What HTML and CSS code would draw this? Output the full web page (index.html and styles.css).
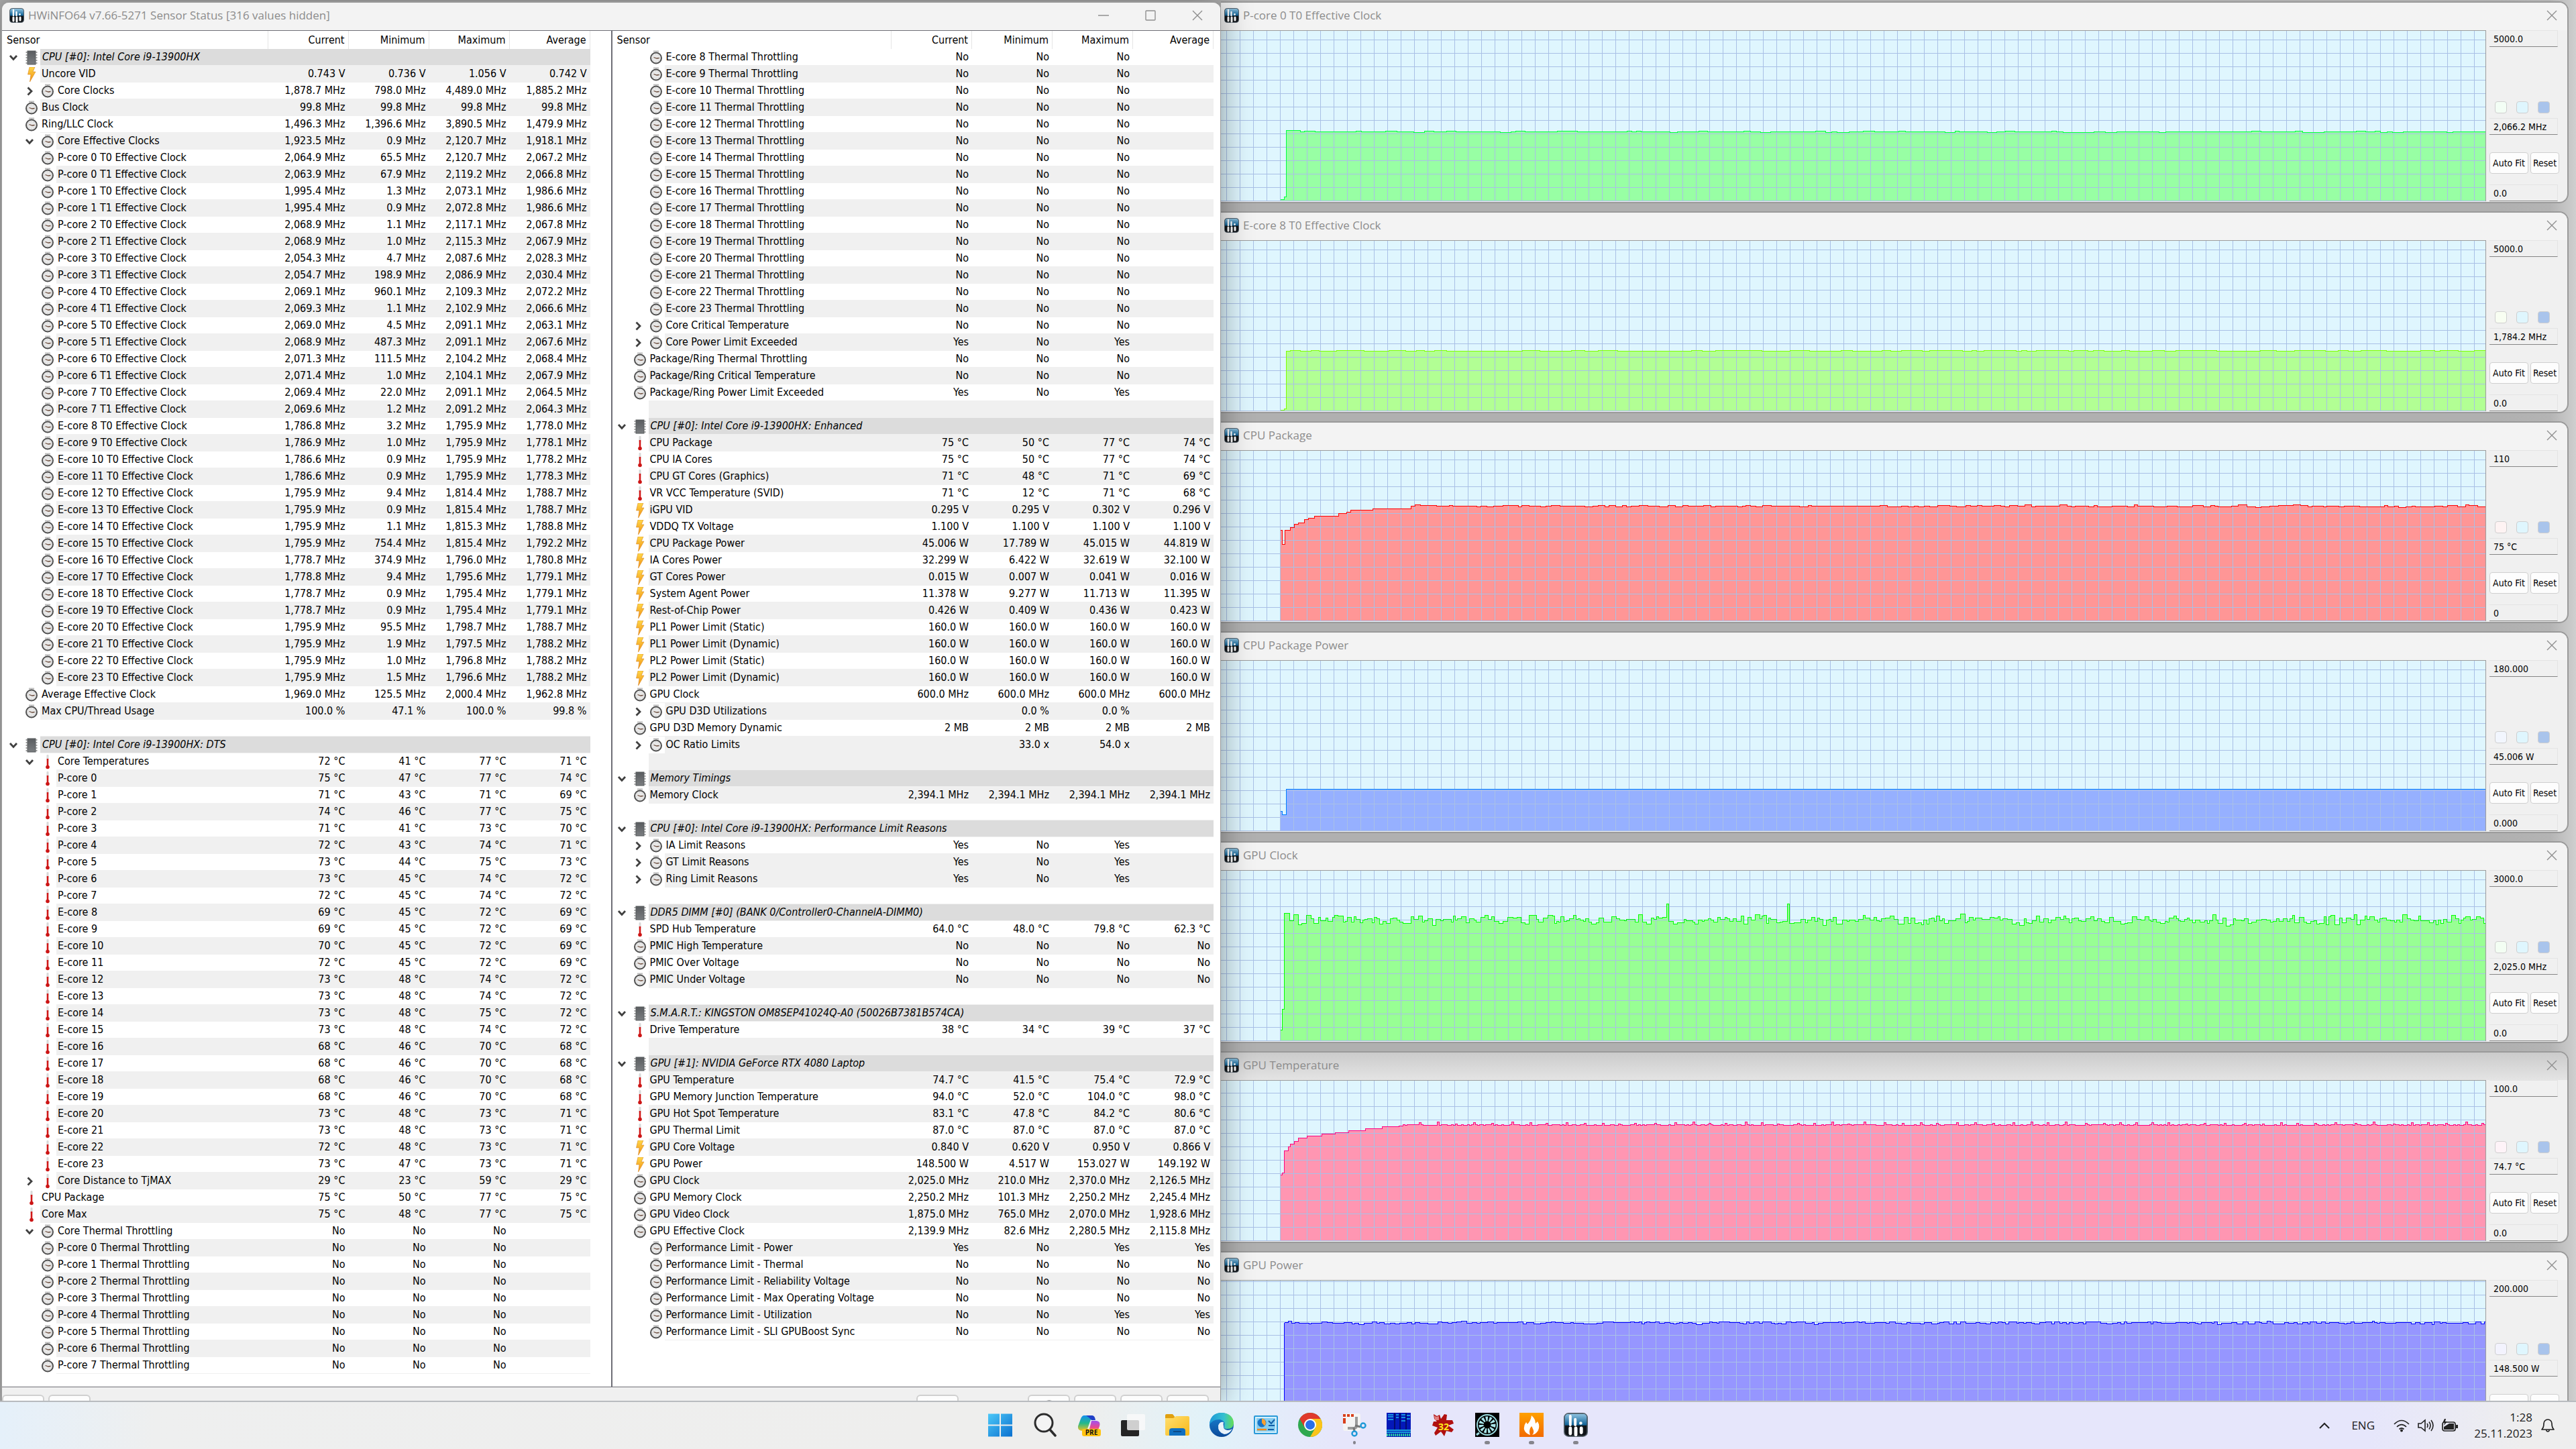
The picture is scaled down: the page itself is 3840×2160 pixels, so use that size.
FILE: index.html
```html
<!DOCTYPE html>
<html lang="en">
<head>
<meta charset="utf-8">
<title>HWiNFO64 Sensor Status</title>
<link rel="stylesheet" href="styles.css">
</head>
<body>
<svg class="sprite" aria-hidden="true">
  <defs>
    <linearGradient id="hwBlue" x1="0" y1="0" x2="0" y2="1"><stop offset="0" stop-color="#8fc3e0"/><stop offset="1" stop-color="#0b5e93"/></linearGradient>
    <linearGradient id="boltFill" x1="0" y1="0" x2="0" y2="1"><stop offset="0" stop-color="#ffd94a"/><stop offset="1" stop-color="#f08a10"/></linearGradient>
    <linearGradient id="chipFill" x1="0" y1="0" x2="0" y2="1"><stop offset="0" stop-color="#5a5d60"/><stop offset="1" stop-color="#7a7d80"/></linearGradient>
    <linearGradient id="winFill" x1="0" y1="0" x2="1" y2="1"><stop offset="0" stop-color="#4cc8f8"/><stop offset="1" stop-color="#0a70cf"/></linearGradient>
    <linearGradient id="folderFill" x1="0" y1="0" x2="1" y2="1"><stop offset="0" stop-color="#ffdf70"/><stop offset="1" stop-color="#f8b818"/></linearGradient>
    <linearGradient id="edgeTop" x1="0" y1="0" x2="1" y2="0"><stop offset="0" stop-color="#1c98d8"/><stop offset=".6" stop-color="#35c0d0"/><stop offset="1" stop-color="#66df52"/></linearGradient>
    <linearGradient id="edgeLow" x1="0" y1="0" x2="0" y2="1"><stop offset="0" stop-color="#1a86d6"/><stop offset="1" stop-color="#0b4a9a"/></linearGradient>
    <linearGradient id="copA" x1="0" y1="0" x2="0" y2="1"><stop offset="0" stop-color="#1490f0"/><stop offset=".5" stop-color="#24b98a"/><stop offset="1" stop-color="#f0c020"/></linearGradient>
    <linearGradient id="copB" x1="0" y1="0" x2="0" y2="1"><stop offset="0" stop-color="#a050f0"/><stop offset=".6" stop-color="#e84a90"/><stop offset="1" stop-color="#f88040"/></linearGradient>
    <linearGradient id="fireFill" x1="0" y1="0" x2="0" y2="1"><stop offset="0" stop-color="#ffa000"/><stop offset="1" stop-color="#f26a00"/></linearGradient>
  </defs>
  <symbol id="i-app" viewBox="0 0 22 22">
    <rect x=".5" y=".5" width="21" height="21" rx="4" fill="#101418" stroke="#55606a"/>
    <path d="M1 11.500V4.500Q1 1 4.500 1h13Q21 1 21 4.500v7z" fill="url(#hwBlue)"/>
    <path d="M6 3v8M10.500 6v5" stroke="#fff" stroke-width="2.400" stroke-linecap="round"/><circle cx="15.500" cy="9.500" r="1.400" fill="#fff"/>
    <path d="M6 14v5M11 14v6M16 14v4" stroke="#fff" stroke-width="3" stroke-linecap="round"/>
  </symbol>
  <symbol id="i-chip" viewBox="0 0 20 22">
    <path d="M2.500 2v19M17.500 2v19" stroke="#9b9b9b" stroke-width="2" stroke-dasharray="2 2"/>
    <rect x="4" y="1" width="12" height="20" fill="url(#chipFill)" stroke="#55585a"/>
  </symbol>
  <symbol id="i-clock" viewBox="0 0 20 22">
    <path d="M6 1.500h8" stroke="#bbb" stroke-width="2"/>
    <circle cx="10" cy="11.500" r="8" fill="#e8e8e8" stroke="#505050" stroke-width="2"/>
    <circle cx="10" cy="11.500" r="5.500" fill="none" stroke="#bdbdbd" stroke-width="1" stroke-dasharray="1 3"/>
    <path d="M6.500 10.500L11 12l3.500-.5" fill="none" stroke="#6a4a3a" stroke-width="1.300"/>
  </symbol>
  <symbol id="i-temp" viewBox="0 0 20 22">
    <rect x="8.500" y="0" width="3" height="9" rx="1" fill="#d8d8d8"/>
    <path d="M10 6v12" stroke="#d01818" stroke-width="2.600"/><circle cx="10" cy="18.500" r="2.800" fill="#cc1515"/>
  </symbol>
  <symbol id="i-bolt" viewBox="0 0 20 22">
    <path d="M7 0h8l-3 7h4L7.500 22l1.500-11H4.500z" fill="url(#boltFill)" stroke="#d98820" stroke-width=".6"/>
  </symbol>
  <symbol id="i-open" viewBox="0 0 14 14"><path d="M2 4l5 5.500L12 4" fill="none" stroke="#404040" stroke-width="2.800"/></symbol>
  <symbol id="i-shut" viewBox="0 0 14 14"><path d="M4.500 1.500L10 7l-5.500 5.500" fill="none" stroke="#404040" stroke-width="2.800"/></symbol>
  <symbol id="i-close" viewBox="0 0 16 16"><path d="M1 1l14 14M15 1L1 15" stroke="#8f8f8f" stroke-width="1.400"/></symbol>
</svg>

<main class="desktop">
  <section class="window sensors">
    <header class="titlebar">
      <svg class="app-icon"><use href="#i-app"/></svg>
      <h1 class="title">HWiNFO64 v7.66-5271 Sensor Status [316 values hidden]</h1>
      <button class="caption-btn" aria-label="Minimize"><svg viewBox="0 0 16 16"><path d="M0 8h16" stroke="#8f8f8f" stroke-width="1.400"/></svg></button>
      <button class="caption-btn" aria-label="Maximize"><svg viewBox="0 0 16 16"><rect x="1" y="1" width="14" height="14" rx="1" fill="none" stroke="#8f8f8f" stroke-width="1.400"/></svg></button>
      <button class="caption-btn" aria-label="Close"><svg><use href="#i-close"/></svg></button>
    </header>
    <div class="panes">
      <div class="pane pane-left"><table class="grid" id="left"></table></div>
      <div class="pane pane-right"><table class="grid" id="right"></table></div>
    </div>
    <footer class="tools">
      <button class="tool" aria-label="Expand"></button>
      <button class="tool" aria-label="Collapse"></button>
      <span class="spring"></span>
      <button class="tool" aria-label="Network"><svg viewBox="0 0 40 30"><path d="M5 5l22 5v18H5z" fill="#3f6f94" stroke="#bcc8d0" stroke-width="2"/></svg></button>
      <span class="tool-space"></span>
      <button class="tool" aria-label="Clock"><svg viewBox="0 0 40 30"><circle cx="20" cy="19" r="14" fill="#fff" stroke="#333" stroke-width="3"/><path d="M20 5v14" stroke="#333" stroke-width="2"/></svg></button>
      <button class="tool" aria-label="Log"><svg viewBox="0 0 40 30"><path d="M6 6h24l4 5v18H6z" fill="#eee" stroke="#aaa" stroke-width="3"/></svg></button>
      <button class="tool" aria-label="Settings"><svg viewBox="0 0 40 30"><path d="M18 4h4l3 24h-10z" fill="#b8c4c8"/></svg></button>
      <button class="tool" aria-label="Exit"></button>
    </footer>
  </section>
  <div class="charts" id="charts"></div>
</main>

<footer class="taskbar">
  <nav class="apps">
    <button aria-label="Start"><svg viewBox="0 0 36 36"><path d="M0 1.500h17v16H0zM19 1.500h17v16H19zM0 19.500h17v16H0zM19 19.500h17v16H19z" fill="url(#winFill)"/></svg></button>
    <button aria-label="Search"><svg viewBox="0 0 36 36"><circle cx="17" cy="15" r="13" fill="#f4f4f4" stroke="#2c2c2c" stroke-width="3"/><path d="M26 25l8 9" stroke="#2c2c2c" stroke-width="3.500" stroke-linecap="round"/></svg></button>
    <button aria-label="Copilot"><svg viewBox="0 0 36 36"><path d="M11 4h11q4 0 5 6h-6l-5 14q-2 4-7 3-8 0-7-7L6 9q2-5 5-5z" fill="url(#copA)"/><path d="M14 4h9q4 0 5 7h-6q-3-4-8-7z" fill="#2140c8"/><path d="M22 12h8q6 1 4 8l-3 8H18z" fill="url(#copB)"/><rect x="8" y="24" width="28" height="11" rx="3" fill="#ffc410"/><text x="22" y="33" class="badge-pre" text-anchor="middle">PRE</text></svg></button>
    <button aria-label="Task view"><svg viewBox="0 0 36 36"><rect x="0" y="11" width="27" height="24" rx="2" fill="#242424"/><rect x="9" y="2" width="27" height="24" rx="2" fill="#fafafa" opacity=".8"/></svg></button>
    <button aria-label="File Explorer"><svg viewBox="0 0 36 36"><path d="M0 4q0-2 2-2h9l4 5v6H0z" fill="#e0a010"/><path d="M0 8h12l4-3h18q2 0 2 2v25q0 2-2 2H2q-2 0-2-2z" fill="url(#folderFill)"/><path d="M6 34V27q0-4 4-4h16q4 0 4 4v7z" fill="#0f6fc0"/><path d="M12 28h12" stroke="#0a4a88" stroke-width="2"/></svg></button>
    <button aria-label="Edge"><svg viewBox="0 0 36 36"><circle cx="18" cy="18" r="18" fill="url(#edgeLow)"/><path d="M0 16Q2 0 18 0q17 1 18 15 0 9-10 9-6 0-4-4 2-8-6-10Q5 9 0 18z" fill="url(#edgeTop)"/><path d="M13 19q2-6 8-5-1 3 0 6-1 5 6 6 4 0 7-2-5 8-12 8-10-3-9-13z" fill="#e8f3fb"/></svg></button>
    <button aria-label="System monitor"><svg viewBox="0 0 36 36"><rect x="1" y="5" width="34" height="26" rx="1" fill="#d6f0fb" stroke="#2a9ad8" stroke-width="2"/><rect x="4" y="8" width="28" height="20" fill="#86cdf0"/><circle cx="12" cy="15" r="6.500" fill="#1774c8"/><path d="M12 15V8.500a6.500 6.500 0 0 1 4 11z" fill="#f8a030"/><path d="M22 12l4 4 5-6M22 19h9" fill="none" stroke="#125fa8" stroke-width="2"/><path d="M5 25h14" stroke="#f08a18" stroke-width="2.500"/><path d="M21 25h9" stroke="#125fa8" stroke-width="2"/></svg></button>
    <button aria-label="Chrome"><svg viewBox="0 0 36 36"><circle cx="18" cy="18" r="18" fill="#2fa84f"/><path d="M2.400 9A18 18 0 0 1 33.600 9H18L10.200 22.500z" fill="#e0392c"/><path d="M33.600 9A18 18 0 0 1 18 36l7.800-13.500L18 9z" fill="#fbc41a"/><circle cx="18" cy="18" r="9" fill="#fff"/><circle cx="18" cy="18" r="7" fill="#2a6fe8"/></svg></button>
    <button class="small-dot" aria-label="Snipping Tool"><svg viewBox="0 0 36 36"><rect x="1" y="1" width="26" height="26" rx="3" fill="#f4f4f4"/><path d="M3 12V4h14" fill="none" stroke="#d8401c" stroke-width="4" stroke-dasharray="4 2"/><path d="M3 12v6" stroke="#d8401c" stroke-width="4" stroke-dasharray="4 2"/><path d="M8 23h9q4 0 4-4V6" fill="none" stroke="#9a9a9a" stroke-width="4"/><path d="M19 19l8 2M17 22l1 6" stroke="#777" stroke-width="3"/><circle cx="31" cy="19" r="3.500" fill="none" stroke="#1f9ad8" stroke-width="2.500"/><circle cx="18" cy="31" r="3.500" fill="none" stroke="#1f9ad8" stroke-width="2.500"/></svg></button>
    <button aria-label="Throttle monitor"><svg viewBox="0 0 36 36"><rect width="36" height="36" fill="#0418b8"/><path d="M2 3h8M2 6h8M2 10h8M14 3h4M14 7h4M22 3h6M22 7h6M22 12h6M30 4h5M30 9h5" stroke="#20b8e8" stroke-width="1.500"/><path d="M0 26h36M0 29h36" stroke="#18a0d8" stroke-width="2"/><path d="M12 0v25M20 0v25M29 0v25" stroke="#020c70" stroke-width="2"/><path d="M0 33h36" stroke="#28c8a0" stroke-width="4" stroke-dasharray="2 1"/></svg></button>
    <button aria-label="Benchmark 32"><svg viewBox="0 0 36 36"><path d="M4 2l5 3 4-2 2 6 5-7 4 1-1 8 9 0 2 5-8 3 8 6-3 4-8-2-3 8-5-7-8 6-2-4 5-8-8-3 2-6 5 0-4-4z" fill="#b01010"/><path d="M5 4l3 2 4-1v6H6z" fill="#e08080"/><text x="19" y="26" class="badge-32" text-anchor="middle">32</text></svg></button>
    <button class="dot" aria-label="Turbine"><svg viewBox="0 0 36 36"><rect width="36" height="36" fill="#000"/><circle cx="18" cy="18" r="15" fill="none" stroke="#9adce0" stroke-width="2"/><circle cx="18" cy="18" r="9" fill="none" stroke="#a8e4e8" stroke-width="7" stroke-dasharray="3 2"/><circle cx="18" cy="18" r="4" fill="#000"/><path d="M6 30l-4 3" stroke="#9adce0" stroke-width="3"/></svg></button>
    <button class="dot" aria-label="FurMark"><svg viewBox="0 0 36 36"><rect width="36" height="36" fill="url(#fireFill)"/><path d="M18 4q6 5 6 12l3-3q4 6 1 13-3 6-9 7 4-4 1-9-1-3-2-4-5 5-2 13-7-2-9-8-1-6 3-11l2 3q5-5 6-13z" fill="#fff"/></svg></button>
    <button class="dot" aria-label="HWiNFO64"><svg viewBox="0 0 22 22"><use href="#i-app" width="22" height="22"/></svg></button>
  </nav>
  <div class="tray">
    <button class="tray-up" aria-label="Show hidden icons"><svg viewBox="0 0 16 16"><path d="M1 12l7-7 7 7" fill="none" stroke="#222" stroke-width="2"/></svg></button>
    <button class="tray-lang">ENG</button>
    <button class="tray-icons" aria-label="Network, volume, battery">
      <svg viewBox="0 0 24 20"><path d="M1 8q11-11 22 0M5 12q7-7 14 0M8.500 15.500q3.500-3 7 0" fill="none" stroke="#222" stroke-width="1.700"/><circle cx="12" cy="17.500" r="2" fill="#222"/></svg>
      <svg viewBox="0 0 24 20"><path d="M1 7h4l6-5v16l-6-5H1zM14 7q2 3 0 6M17 4.500q4 5.500 0 11M20 2q6 8 0 16" fill="none" stroke="#222" stroke-width="1.600"/></svg>
      <svg viewBox="0 0 24 20"><rect x="1" y="5" width="19" height="13" rx="3" fill="none" stroke="#222" stroke-width="1.700"/><path d="M3 12l8-5h7v9H3z" fill="#222"/><path d="M21 9h3v5h-3zM4 0L1 6h3L3 10l5-6H5l1-4z" fill="#222"/></svg>
    </button>
    <div class="clock"><time>1:28</time><time>25.11.2023</time></div>
    <button class="tray-bell" aria-label="Notifications"><svg viewBox="0 0 20 22"><path d="M1 17q3-3 3-9a6 6 0 0 1 12 0q0 6 3 9zM7.500 18q2.500 4 5 0" fill="none" stroke="#222" stroke-width="1.700" stroke-linejoin="round"/></svg></button>
  </div>
</footer>
<script src="app.js"></script>
</body>
</html>
```
FILE: styles.css
```css
* { box-sizing: border-box; }

body {
  margin: 0;
  height: 100vh;
  display: flex;
  flex-direction: column;
  overflow: hidden;
  background: linear-gradient(90deg, #b0b0b0 97%, #b4b4b4 99%, #cfcfcf);
  color: #000;
  font-family: "DejaVu Sans Condensed", "DejaVu Sans", sans-serif;
  font-size: 16px;
}

button { font: inherit; color: inherit; padding: 0; border: 0; background: none; }
.sprite { position: absolute; width: 0; height: 0; }

.desktop {
  flex: 1;
  min-height: 0;
  overflow: hidden;
  display: grid;
  grid-template-columns: 1820fr 2020fr;
  grid-template-rows: minmax(0, 1fr);
  padding-top: 2px;
}

/* Windows */
.window {
  display: flex;
  flex-direction: column;
  background: #f0f0f0;
  border: 2px solid #9a9a9a;
  border-radius: 12px;
  overflow: hidden;
}
.titlebar {
  display: flex;
  align-items: center;
  height: 41px;
  flex: none;
  background: #f3f3f3;
  padding-bottom: 4px;
  padding-right: 15px;
}
.app-icon { width: 22px; height: 22px; flex: none; }
.title {
  flex: 1;
  margin: 0 0 0 6px;
  font: 17px/24px "Open Sans", sans-serif;
  color: #8c8c8c;
}
.caption-btn { width: 16px; height: 16px; }
.caption-btn svg { display: block; width: 16px; height: 16px; }

.sensors {
  position: relative;
  z-index: 1;
  min-height: 0;
  margin-left: 1px;
  border-width: 2px 1px 0 2px;
  border-radius: 12px 12px 0 0;
  box-shadow: 0 0 48px rgba(0, 0, 0, .4);
}
.sensors .titlebar { padding: 0 26px 4px 11px; gap: 0; }
.sensors .caption-btn { margin-left: 54px; }

/* Sensor lists */
.panes {
  flex: 1;
  min-height: 0;
  display: grid;
  grid-template-columns: 908fr 909fr;
  border: solid #6e6e76;
  border-width: 1px 0;
}
.pane { background: #fff; overflow: hidden; }
.pane-left { padding-right: 31px; }
.pane-right { padding-right: 10px; border-left: 2px solid #6e6e76; }
.grid {
  width: 100%;
  border-collapse: separate;
  border-spacing: 0;
  table-layout: fixed;
}
.grid th, .grid td {
  height: 25px;
  padding: 0 5px 0 0;
  line-height: 24px;
  text-align: right;
  font-weight: 400;
  white-space: nowrap;
}
.grid td, .grid tbody th { border-bottom: 1px solid #f0f0f0; }
.grid thead th { height: 27px; border-right: 1px solid #e5e5e5; }
.grid thead th:first-child { padding-left: 7px; text-align: left; }
.grid thead th:not(:first-child) { width: 120px; }
.grid tbody th { padding: 0; border: 0; }
.name { display: flex; align-items: center; height: 25px; text-align: left; }
.twisty { width: 14px; height: 14px; flex: none; }
.kind { width: 20px; height: 22px; flex: none; }
.name .label {
  flex: 1;
  height: 25px;
  padding-left: 2px;
  border-bottom: 1px solid #f0f0f0;
  line-height: 24px;
}
.lvl-0 { padding-left: 10px; gap: 10px; }
.lvl-1 { padding-left: 34px; gap: 3px; }
.lvl-2 { padding-left: 58px; gap: 3px; }
.lvl-2.foldable { padding-left: 34px; gap: 10px; }
.lvl-2.foldable .label { margin-left: -7px; }
.lvl-0 .label { margin-left: -7px; padding-left: 3px; }
.blank { padding-left: 57px; }
.pane-right .name { margin-left: -3px; }
.odd td, .odd .label { background: #f0f0f0; }
.group td, .group .label { background: #dcdcdc; }
.group .label { font-style: italic; }

.tools {
  height: 20px;
  flex: none;
  display: flex;
  align-items: flex-start;
  gap: 6px;
  padding: 11px 17px 0 0;
  overflow: hidden;
}
.tool {
  width: 63px;
  height: 40px;
  flex: none;
  background: #fdfdfd;
  border: 2px solid #d0d0d0;
  border-radius: 6px;
}
.tool svg { display: block; width: 40px; height: 30px; margin: 0 auto; }
.spring { flex: 1; }
.tool-space { width: 91px; }

/* Graph windows */
.charts {
  display: flex;
  flex-direction: column;
  gap: 12px;
  min-height: 0;
  padding-right: 11px;
}
.graph { flex: none; border-left: 0; border-radius: 0 14px 14px 0; }
.graph .titlebar { padding-left: 5px; }
.graph.shaded .titlebar { background: linear-gradient(#cbcbcb, #e4e4e4); }
.graph-body { display: flex; gap: 5px; padding-bottom: 1px; }
.plot {
  flex: 1;
  min-width: 0;
  border-top: 1px solid #9c9c9c;
  border-right: 1px solid #9c9c9c;
}
.plot svg { display: block; width: 100%; background: #dff6fe; }
.plot path { shape-rendering: crispEdges; }
.plot .trace { fill: none; stroke-width: 1; }
.plot .lines { fill: none; stroke: #a9c0e6; }
.side {
  width: 116px;
  display: flex;
  flex-direction: column;
  font-size: 14px;
}
.field {
  width: 102px;
  height: 25px;
  padding: 0 6px;
  border: solid #e4e4e4;
  border-width: 1px 1px 1px 0;
  border-bottom-color: #858585;
  background: #f0f0f0;
  color: #000;
  font: inherit;
}
.swatches { display: flex; gap: 14px; margin: auto 0 7px 8px; }
.swatch {
  width: 18px;
  height: 18px;
  border: 1px solid #cfcfcf;
  border-radius: 4px;
}
.actions { display: flex; gap: 3px; margin: 26px 0 16px; }
.action {
  width: 58px;
  height: 32px;
  background: #fdfdfd;
  border: 1px solid #cfcfcf;
  border-radius: 4px;
}
.action.reset { width: 43px; }

/* Taskbar */
.taskbar {
  position: relative;
  z-index: 2;
  flex: none;
  height: 72px;
  display: grid;
  grid-template-columns: 1fr auto 1fr;
  border-top: 2px solid #b8bbbf;
  background: linear-gradient(90deg, #e5f0fa, #eeefef 6%, #eeeeed 36%, #eeeeed 42%, #e1f2f9 47%, #e6e6fb 52%, #e6e6fb 92%, #eeeeee 98%);
}
.apps { grid-column: 2; display: flex; gap: 30px; padding-top: 16px; }
.apps button { position: relative; width: 36px; height: 36px; }
.apps svg { display: block; width: 36px; height: 36px; }
.dot::after, .small-dot::after {
  content: "";
  position: absolute;
  left: 14px;
  top: 42px;
  width: 8px;
  height: 5px;
  border-radius: 3px;
  background: #85858d;
}
.small-dot::after { left: 16px; width: 4px; }
.badge-pre { font: 700 10px "Open Sans", sans-serif; fill: #111; }
.badge-32 { font: 700 14px "Open Sans", sans-serif; fill: #ffe818; }
.tray {
  display: flex;
  justify-content: flex-end;
  align-items: center;
  padding-right: 32px;
  font: 17px/24px "Open Sans", sans-serif;
  color: #222;
}
.tray svg { display: block; }
.tray-up svg { width: 16px; height: 16px; }
.tray-lang { margin-left: 32px; }
.tray-icons { display: flex; gap: 12px; margin-left: 28px; }
.tray-icons svg { width: 24px; height: 20px; }
.clock { display: flex; flex-direction: column; width: 98px; text-align: right; margin: 0 13px; }
.tray-bell svg { width: 20px; height: 22px; }
```
FILE: app.js
```js
// Row format: kind + level mark | name | current | minimum | maximum | average | unit
// kinds: g group, c clock, t temperature, v voltage/power
// marks: 1 first level, 2 second level, + folded, - unfolded
const leftRows = `g|CPU [#0]: Intel Core i9-13900HX
v1|Uncore VID|0.743|0.736|1.056|0.742|V
c+|Core Clocks|1,878.7|798.0|4,489.0|1,885.2|MHz
c1|Bus Clock|99.8|99.8|99.8|99.8|MHz
c1|Ring/LLC Clock|1,496.3|1,396.6|3,890.5|1,479.9|MHz
c-|Core Effective Clocks|1,923.5|0.9|2,120.7|1,918.1|MHz
c2|P-core 0 T0 Effective Clock|2,064.9|65.5|2,120.7|2,067.2|MHz
c2|P-core 0 T1 Effective Clock|2,063.9|67.9|2,119.2|2,066.8|MHz
c2|P-core 1 T0 Effective Clock|1,995.4|1.3|2,073.1|1,986.6|MHz
c2|P-core 1 T1 Effective Clock|1,995.4|0.9|2,072.8|1,986.6|MHz
c2|P-core 2 T0 Effective Clock|2,068.9|1.1|2,117.1|2,067.8|MHz
c2|P-core 2 T1 Effective Clock|2,068.9|1.0|2,115.3|2,067.9|MHz
c2|P-core 3 T0 Effective Clock|2,054.3|4.7|2,087.6|2,028.3|MHz
c2|P-core 3 T1 Effective Clock|2,054.7|198.9|2,086.9|2,030.4|MHz
c2|P-core 4 T0 Effective Clock|2,069.1|960.1|2,109.3|2,072.2|MHz
c2|P-core 4 T1 Effective Clock|2,069.3|1.1|2,102.9|2,066.6|MHz
c2|P-core 5 T0 Effective Clock|2,069.0|4.5|2,091.1|2,063.1|MHz
c2|P-core 5 T1 Effective Clock|2,068.9|487.3|2,091.1|2,067.6|MHz
c2|P-core 6 T0 Effective Clock|2,071.3|111.5|2,104.2|2,068.4|MHz
c2|P-core 6 T1 Effective Clock|2,071.4|1.0|2,104.1|2,067.9|MHz
c2|P-core 7 T0 Effective Clock|2,069.4|22.0|2,091.1|2,064.5|MHz
c2|P-core 7 T1 Effective Clock|2,069.6|1.2|2,091.2|2,064.3|MHz
c2|E-core 8 T0 Effective Clock|1,786.8|3.2|1,795.9|1,778.0|MHz
c2|E-core 9 T0 Effective Clock|1,786.9|1.0|1,795.9|1,778.1|MHz
c2|E-core 10 T0 Effective Clock|1,786.6|0.9|1,795.9|1,778.2|MHz
c2|E-core 11 T0 Effective Clock|1,786.6|0.9|1,795.9|1,778.3|MHz
c2|E-core 12 T0 Effective Clock|1,795.9|9.4|1,814.4|1,788.7|MHz
c2|E-core 13 T0 Effective Clock|1,795.9|0.9|1,815.4|1,788.7|MHz
c2|E-core 14 T0 Effective Clock|1,795.9|1.1|1,815.3|1,788.8|MHz
c2|E-core 15 T0 Effective Clock|1,795.9|754.4|1,815.4|1,792.2|MHz
c2|E-core 16 T0 Effective Clock|1,778.7|374.9|1,796.0|1,780.8|MHz
c2|E-core 17 T0 Effective Clock|1,778.8|9.4|1,795.6|1,779.1|MHz
c2|E-core 18 T0 Effective Clock|1,778.7|0.9|1,795.4|1,779.1|MHz
c2|E-core 19 T0 Effective Clock|1,778.7|0.9|1,795.4|1,779.1|MHz
c2|E-core 20 T0 Effective Clock|1,795.9|95.5|1,798.7|1,788.7|MHz
c2|E-core 21 T0 Effective Clock|1,795.9|1.9|1,797.5|1,788.2|MHz
c2|E-core 22 T0 Effective Clock|1,795.9|1.0|1,796.8|1,788.2|MHz
c2|E-core 23 T0 Effective Clock|1,795.9|1.5|1,796.6|1,788.2|MHz
c1|Average Effective Clock|1,969.0|125.5|2,000.4|1,962.8|MHz
c1|Max CPU/Thread Usage|100.0|47.1|100.0|99.8|%

g|CPU [#0]: Intel Core i9-13900HX: DTS
t-|Core Temperatures|72|41|77|71|°C
t2|P-core 0|75|47|77|74|°C
t2|P-core 1|71|43|71|69|°C
t2|P-core 2|74|46|77|75|°C
t2|P-core 3|71|41|73|70|°C
t2|P-core 4|72|43|74|71|°C
t2|P-core 5|73|44|75|73|°C
t2|P-core 6|73|45|74|72|°C
t2|P-core 7|72|45|74|72|°C
t2|E-core 8|69|45|72|69|°C
t2|E-core 9|69|45|72|69|°C
t2|E-core 10|70|45|72|69|°C
t2|E-core 11|72|45|72|69|°C
t2|E-core 12|73|48|74|72|°C
t2|E-core 13|73|48|74|72|°C
t2|E-core 14|73|48|75|72|°C
t2|E-core 15|73|48|74|72|°C
t2|E-core 16|68|46|70|68|°C
t2|E-core 17|68|46|70|68|°C
t2|E-core 18|68|46|70|68|°C
t2|E-core 19|68|46|70|68|°C
t2|E-core 20|73|48|73|71|°C
t2|E-core 21|73|48|73|71|°C
t2|E-core 22|72|48|73|71|°C
t2|E-core 23|73|47|73|71|°C
t+|Core Distance to TjMAX|29|23|59|29|°C
t1|CPU Package|75|50|77|75|°C
t1|Core Max|75|48|77|75|°C
c-|Core Thermal Throttling|No|No|No
c2|P-core 0 Thermal Throttling|No|No|No
c2|P-core 1 Thermal Throttling|No|No|No
c2|P-core 2 Thermal Throttling|No|No|No
c2|P-core 3 Thermal Throttling|No|No|No
c2|P-core 4 Thermal Throttling|No|No|No
c2|P-core 5 Thermal Throttling|No|No|No
c2|P-core 6 Thermal Throttling|No|No|No
c2|P-core 7 Thermal Throttling|No|No|No`;

const rightRows = `c2|E-core 8 Thermal Throttling|No|No|No
c2|E-core 9 Thermal Throttling|No|No|No
c2|E-core 10 Thermal Throttling|No|No|No
c2|E-core 11 Thermal Throttling|No|No|No
c2|E-core 12 Thermal Throttling|No|No|No
c2|E-core 13 Thermal Throttling|No|No|No
c2|E-core 14 Thermal Throttling|No|No|No
c2|E-core 15 Thermal Throttling|No|No|No
c2|E-core 16 Thermal Throttling|No|No|No
c2|E-core 17 Thermal Throttling|No|No|No
c2|E-core 18 Thermal Throttling|No|No|No
c2|E-core 19 Thermal Throttling|No|No|No
c2|E-core 20 Thermal Throttling|No|No|No
c2|E-core 21 Thermal Throttling|No|No|No
c2|E-core 22 Thermal Throttling|No|No|No
c2|E-core 23 Thermal Throttling|No|No|No
c+|Core Critical Temperature|No|No|No
c+|Core Power Limit Exceeded|Yes|No|Yes
c1|Package/Ring Thermal Throttling|No|No|No
c1|Package/Ring Critical Temperature|No|No|No
c1|Package/Ring Power Limit Exceeded|Yes|No|Yes

g|CPU [#0]: Intel Core i9-13900HX: Enhanced
t1|CPU Package|75|50|77|74|°C
t1|CPU IA Cores|75|50|77|74|°C
t1|CPU GT Cores (Graphics)|71|48|71|69|°C
t1|VR VCC Temperature (SVID)|71|12|71|68|°C
v1|iGPU VID|0.295|0.295|0.302|0.296|V
v1|VDDQ TX Voltage|1.100|1.100|1.100|1.100|V
v1|CPU Package Power|45.006|17.789|45.015|44.819|W
v1|IA Cores Power|32.299|6.422|32.619|32.100|W
v1|GT Cores Power|0.015|0.007|0.041|0.016|W
v1|System Agent Power|11.378|9.277|11.713|11.395|W
v1|Rest-of-Chip Power|0.426|0.409|0.436|0.423|W
v1|PL1 Power Limit (Static)|160.0|160.0|160.0|160.0|W
v1|PL1 Power Limit (Dynamic)|160.0|160.0|160.0|160.0|W
v1|PL2 Power Limit (Static)|160.0|160.0|160.0|160.0|W
v1|PL2 Power Limit (Dynamic)|160.0|160.0|160.0|160.0|W
c1|GPU Clock|600.0|600.0|600.0|600.0|MHz
c+|GPU D3D Utilizations||0.0|0.0||%
c1|GPU D3D Memory Dynamic|2|2|2|2|MB
c+|OC Ratio Limits||33.0|54.0||x
*
g|Memory Timings
c1*|Memory Clock|2,394.1|2,394.1|2,394.1|2,394.1|MHz

g|CPU [#0]: Intel Core i9-13900HX: Performance Limit Reasons
c+~|IA Limit Reasons|Yes|No|Yes
c+*|GT Limit Reasons|Yes|No|Yes
c+|Ring Limit Reasons|Yes|No|Yes

g|DDR5 DIMM [#0] (BANK 0/Controller0-ChannelA-DIMM0)
t1|SPD Hub Temperature|64.0|48.0|79.8|62.3|°C
c1|PMIC High Temperature|No|No|No|No
c1|PMIC Over Voltage|No|No|No|No
c1|PMIC Under Voltage|No|No|No|No

g|S.M.A.R.T.: KINGSTON OM8SEP41024Q-A0 (50026B7381B574CA)
t1|Drive Temperature|38|34|39|37|°C

g|GPU [#1]: NVIDIA GeForce RTX 4080 Laptop
t1|GPU Temperature|74.7|41.5|75.4|72.9|°C
t1|GPU Memory Junction Temperature|94.0|52.0|104.0|98.0|°C
t1|GPU Hot Spot Temperature|83.1|47.8|84.2|80.6|°C
t1|GPU Thermal Limit|87.0|87.0|87.0|87.0|°C
v1|GPU Core Voltage|0.840|0.620|0.950|0.866|V
v1|GPU Power|148.500|4.517|153.027|149.192|W
c1|GPU Clock|2,025.0|210.0|2,370.0|2,126.5|MHz
c1|GPU Memory Clock|2,250.2|101.3|2,250.2|2,245.4|MHz
c1|GPU Video Clock|1,875.0|765.0|2,070.0|1,928.6|MHz
c1|GPU Effective Clock|2,139.9|82.6|2,280.5|2,115.8|MHz
c2|Performance Limit - Power|Yes|No|Yes|Yes
c2|Performance Limit - Thermal|No|No|No|No
c2|Performance Limit - Reliability Voltage|No|No|No|No
c2|Performance Limit - Max Operating Voltage|No|No|No|No
c2|Performance Limit - Utilization|No|No|Yes|Yes
c2|Performance Limit - SLI GPUBoost Sync|No|No|No|No`;

const icons = { g: 'chip', c: 'clock', t: 'temp', v: 'bolt' };
const svg = (cls, id) => `<svg class="${cls}"><use href="#i-${id}"/></svg>`;

function fillTable(id, text) {
  const rows = text.split('\n').map((line, i) => {
    const [mark, name = '', ...rest] = line.split('|');
    const unit = rest[4] || '';
    const cells = [0, 1, 2, 3].map(k => {
      const v = rest[k] || '';
      return `<td>${v && unit ? v + ' ' + unit : v}</td>`;
    }).join('');
    // "*" forces a shaded row and "~" a plain one where folded children shift the stripes
    let odd = i % 2 === 1;
    if (mark.includes('*')) odd = true;
    if (mark.includes('~')) odd = false;
    if (mark === '' && i > 42 && i < 58) odd = false;
    const kind = mark[0], fold = mark[1];
    let cls = 'name blank', inner = '';
    if (icons[kind]) {
      if (kind === 'g') { cls = 'name lvl-0'; inner = svg('twisty', 'open'); }
      else if (fold === '+' || fold === '-') { cls = 'name lvl-2 foldable'; inner = svg('twisty', fold === '+' ? 'shut' : 'open'); }
      else cls = 'name lvl-' + fold;
      inner += svg('kind', icons[kind]);
    }
    return `<tr class="${odd ? 'odd' : ''} ${kind === 'g' ? 'group' : ''}"><th scope="row"><div class="${cls}">${inner}<span class="label">${name}</span></div></th>${cells}</tr>`;
  });
  document.getElementById(id).innerHTML =
    '<thead><tr>' + ['Sensor', 'Current', 'Minimum', 'Maximum', 'Average'].map(h => `<th scope="col">${h}</th>`).join('') +
    '</tr></thead><tbody>' + rows.join('') + '</tbody>';
}
fillTable('left', leftRows);
fillTable('right', rightRows);

// Graphs: lead is the warm-up section, then samples wander inside [low, high]
const W = 1885;
const graphs = [
  { title: 'P-core 0 T0 Effective Clock', max: '5000.0', now: '2,066.2 MHz', min: '0.0', h: 254, line: '#00ff40', fill: '#98ffa4', tint: '#f3fef5',
    lead: [[88, 251], [94, 247], [97, 148], [118, 150]], low: 149, high: 151, wide: 12 },
  { title: 'E-core 8 T0 Effective Clock', max: '5000.0', now: '1,784.2 MHz', min: '0.0', h: 254, line: '#80ff00', fill: '#b2ff94', tint: '#f8fef2',
    lead: [[88, 252], [94, 250], [97, 164]], low: 163, high: 164, wide: 14 },
  { title: 'CPU Package', max: '110', now: '75 °C', min: '0', h: 254, line: '#ff0000', fill: '#ff9696', tint: '#fef3f3',
    lead: [[88, 118], [91, 139], [95, 118], [103, 114], [109, 109], [115, 107], [124, 102], [130, 100], [139, 97], [175, 93], [187, 91], [193, 88], [226, 86], [283, 82]], low: 80, high: 84, wide: 9 },
  { title: 'CPU Package Power', max: '180.000', now: '45.006 W', min: '0.000', h: 254, line: '#0080ff', fill: '#96b0ff', tint: '#f2f6fe',
    lead: [[88, 224], [91, 229], [97, 191]], low: 191, high: 191, wide: 20 },
  { title: 'GPU Clock', max: '3000.0', now: '2,025.0 MHz', min: '0.0', h: 254, line: '#00ff00', fill: '#98ff94', tint: '#f3fef3',
    lead: [[88, 237], [91, 206], [94, 63], [102, 74]], low: 64, high: 82, wide: 5, peaks: [661, 842] },
  { title: 'GPU Temperature', max: '100.0', now: '74.7 °C', min: '0.0', h: 239, line: '#ff0080', fill: '#ff96b2', tint: '#fef3f8', shaded: true,
    lead: [[88, 140], [91, 137], [94, 104], [100, 98], [103, 94], [109, 90], [115, 85], [128, 82], [150, 79], [170, 77], [190, 74], [215, 71], [240, 68], [265, 67]], low: 65, high: 66, wide: 3, beat: 26 },
  { title: 'GPU Power', max: '200.000', now: '148.500 W', min: '0.000', h: 242, line: '#0000ff', fill: '#9696ff', tint: '#f3f3fe',
    lead: [[94, 62]], low: 60, high: 65, wide: 6 }
];

function tracePoints(g, n) {
  let seed = 17 + n * 91;
  const rnd = () => (seed = (seed * 16807) % 2147483647) / 2147483647;
  const pts = g.lead.slice();
  const peaks = (g.peaks || []).slice();
  let x = pts[pts.length - 1][0] + 6, beat = 0;
  while (x < W) {
    beat += g.wide;
    let y = Math.round(g.low + (rnd() + rnd()) / 2 * (g.high - g.low));
    if (g.beat && beat >= g.beat) { y -= Math.round(2 + rnd() * 2); beat = Math.round(rnd() * 8) - 4; }
    if (peaks.length && x >= peaks[0]) { pts.push([x, 49]); x += 3; peaks.shift(); }
    pts.push([x, y]);
    x += Math.max(2, Math.round(g.wide * (g.beat ? 1 : .5 + rnd())));
  }
  return pts;
}

document.getElementById('charts').innerHTML = graphs.map((g, n) => {
  const pts = tracePoints(g, n);
  const steps = pts.map(([x, y], i) => (i ? `H${x}.5` : `M${x}.5 ${y}.5`) + `V${y}.5`).join('') + `H${W}`;
  const first = n === 6 ? `M94.5 ${g.h}V62.5` : '';
  let lines = '';
  for (let x = 8; x < W; x += 20) lines += `M${x}.5 0V${g.h}`;
  for (let y = g.h - 1; y > 0; y -= 20) lines += `M0 ${y}.5H${W}`;
  return `<section class="window graph ${g.shaded ? 'shaded' : ''}">
    <header class="titlebar">${svg('app-icon', 'app')}<h2 class="title">${g.title}</h2>
      <button class="caption-btn" aria-label="Close"><svg><use href="#i-close"/></svg></button></header>
    <div class="graph-body">
      <div class="plot"><svg viewBox="0 0 ${W} ${g.h}" height="${g.h}" preserveAspectRatio="none">
        <path d="${steps}V${g.h}H${pts[0][0]}z" fill="${g.fill}"/><path class="lines" d="${lines}"/>
        <path class="trace" d="${first}${steps}" stroke="${g.line}"/></svg></div>
      <div class="side">
        <input class="field" aria-label="Upper limit" value="${g.max}">
        <div class="swatches"><button class="swatch" aria-label="Line colour" style="background:${g.tint}"></button><button class="swatch" aria-label="Background colour" style="background:#dff6fe"></button><button class="swatch" aria-label="Grid colour" style="background:#a9c4ec"></button></div>
        <input class="field" aria-label="Current value" value="${g.now}" readonly>
        <div class="actions"><button class="action">Auto Fit</button><button class="action reset">Reset</button></div>
        <input class="field" aria-label="Lower limit" value="${g.min}">
      </div>
    </div>
  </section>`;
}).join('');
```
